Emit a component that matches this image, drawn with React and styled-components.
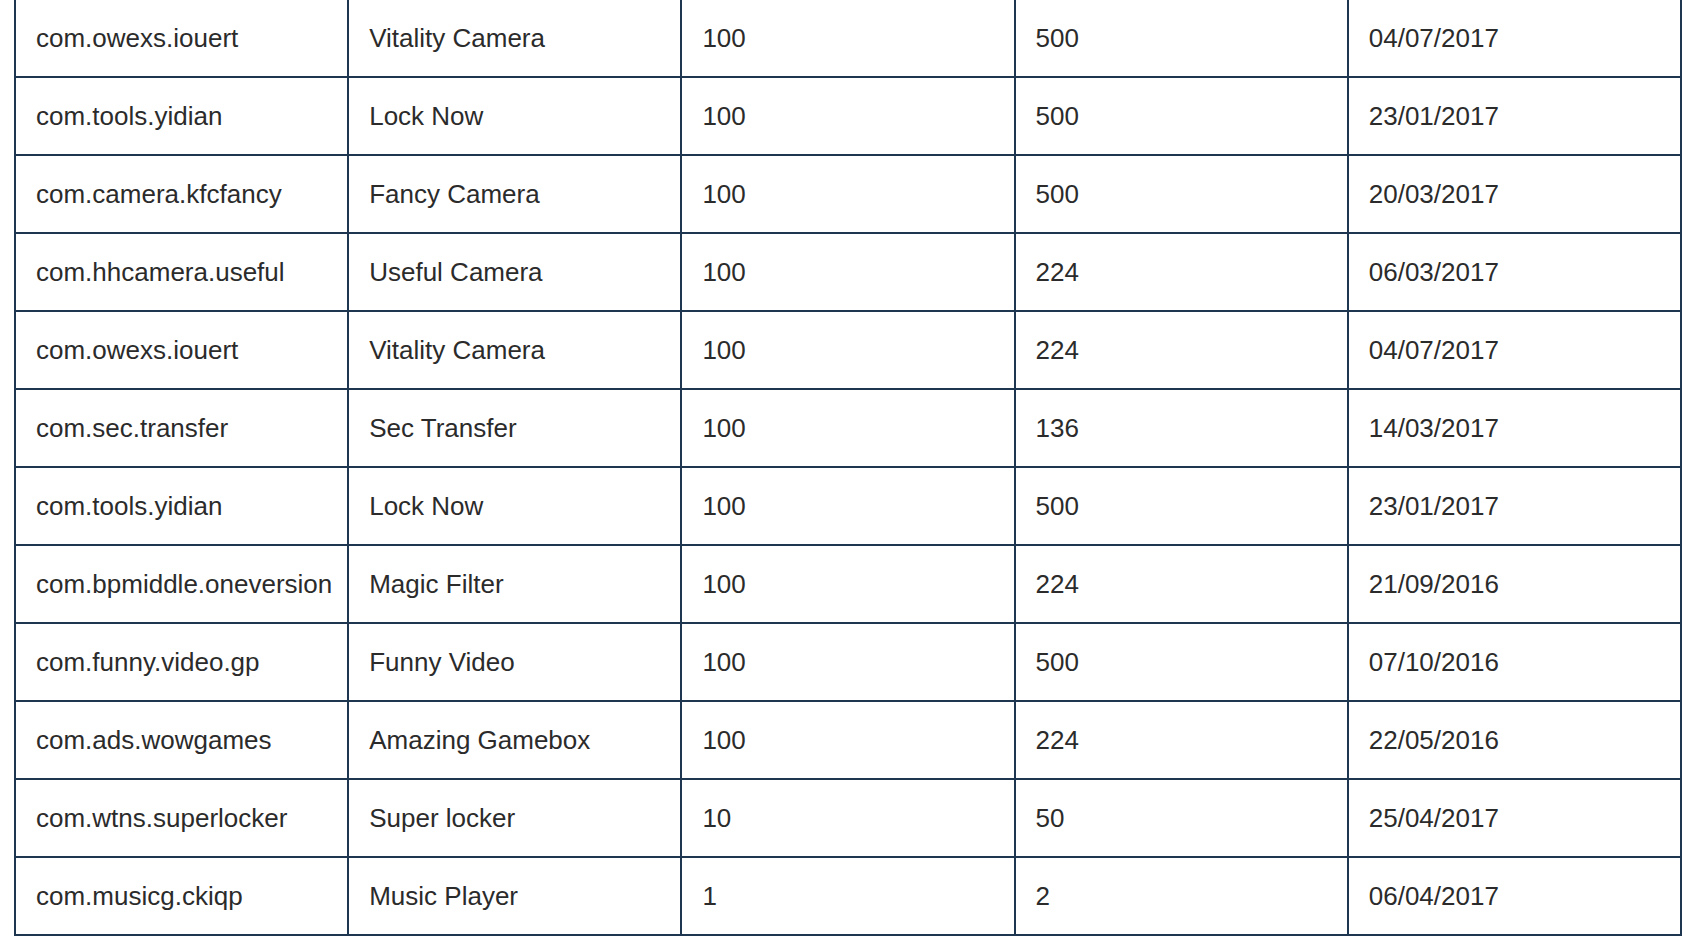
import React from "react"
import styled, { createGlobalStyle } from "styled-components"

const GlobalStyle = createGlobalStyle`
  html, body {
    margin: 0;
    padding: 0;
    background: #fff;
  }
  body {
    font-family: "Liberation Sans", Arial, Helvetica, sans-serif;
    color: #2b2b2b;
  }
`

const Page = styled.div`
  padding: 0 14px;
  overflow: hidden;
`

const Table = styled.table`
  width: 1668px;
  margin-top: -2px;
  border-collapse: collapse;
  table-layout: fixed;
  border: 2px solid #1f3651;
`

const Cell = styled.td`
  height: 78px;
  padding: 0 0 0 20px;
  box-sizing: border-box;
  border: 2px solid #1f3651;
  font-size: 26px;
  line-height: 30px;
  color: #2b2b2b;
  white-space: nowrap;
  vertical-align: middle;
`

const rows = [
  ["com.owexs.iouert", "Vitality Camera", "100", "500", "04/07/2017"],
  ["com.tools.yidian", "Lock Now", "100", "500", "23/01/2017"],
  ["com.camera.kfcfancy", "Fancy Camera", "100", "500", "20/03/2017"],
  ["com.hhcamera.useful", "Useful Camera", "100", "224", "06/03/2017"],
  ["com.owexs.iouert", "Vitality Camera", "100", "224", "04/07/2017"],
  ["com.sec.transfer", "Sec Transfer", "100", "136", "14/03/2017"],
  ["com.tools.yidian", "Lock Now", "100", "500", "23/01/2017"],
  ["com.bpmiddle.oneversion", "Magic Filter", "100", "224", "21/09/2016"],
  ["com.funny.video.gp", "Funny Video", "100", "500", "07/10/2016"],
  ["com.ads.wowgames", "Amazing Gamebox", "100", "224", "22/05/2016"],
  ["com.wtns.superlocker", "Super locker", "10", "50", "25/04/2017"],
  ["com.musicg.ckiqp", "Music Player", "1", "2", "06/04/2017"],
]

const App = () => {
  return (
    <Page>
      <GlobalStyle />
      <Table>
        <tbody>
          {rows.map((row, i) => (
            <tr key={i}>
              {row.map((value, j) => (
                <Cell key={j}>{value}</Cell>
              ))}
            </tr>
          ))}
        </tbody>
      </Table>
    </Page>
  )
}

export default App
